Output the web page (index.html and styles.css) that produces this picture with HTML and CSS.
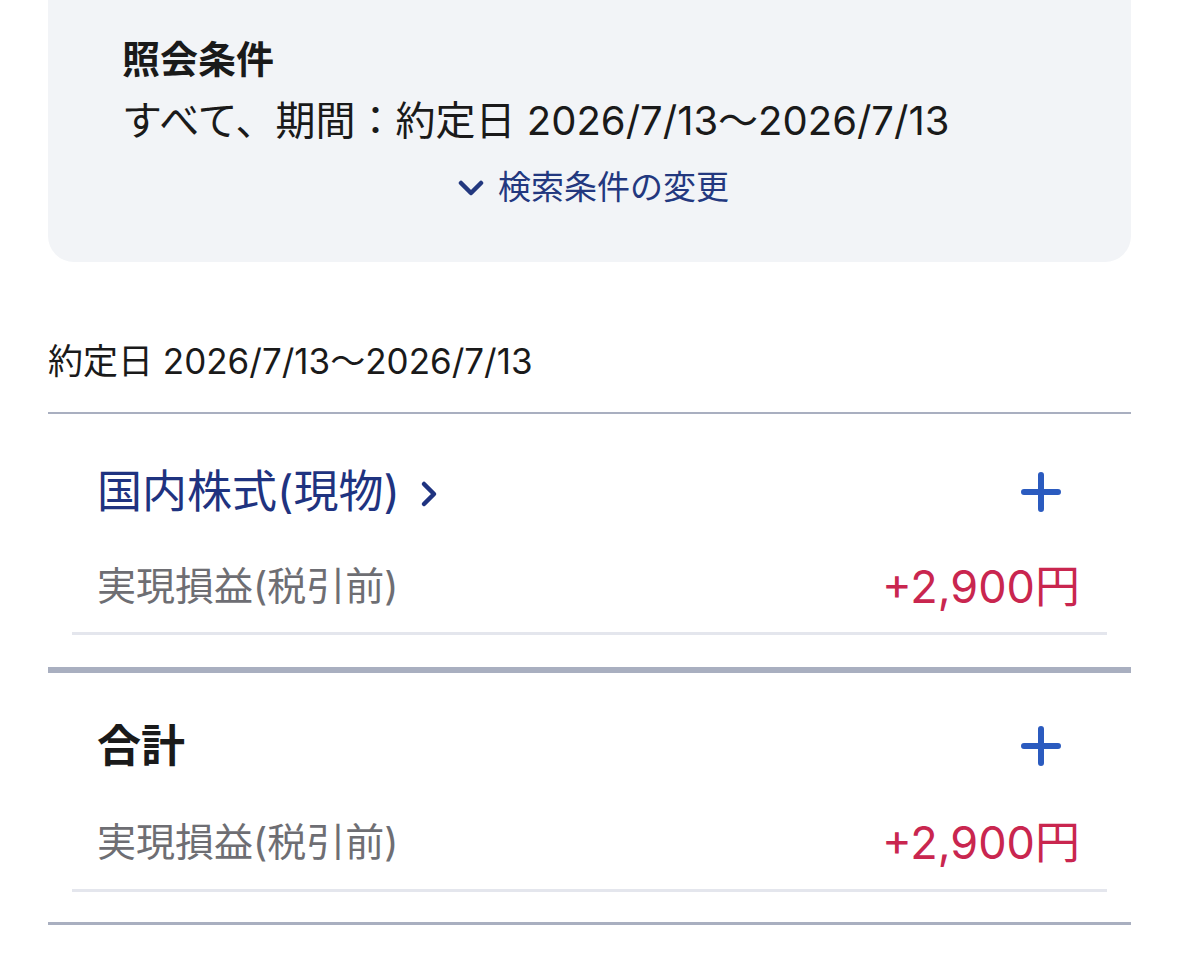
FILE: index.html
```html
<!DOCTYPE html>
<html lang="ja">
<head>
<meta charset="utf-8">
<title>照会結果</title>
<link rel="stylesheet" href="styles.css">
</head>
<body>
<div class="page">
  <section class="card">
    <h2 class="card-title">照会条件</h2>
    <p class="card-text">すべて、期間：約定日 2026/7/13～2026/7/13</p>
    <a class="card-link" href="#">
      <svg class="chev-down" viewBox="0 0 26 17" width="26" height="17"><path d="M3 3 L13 13 L23 3" fill="none" stroke="currentColor" stroke-width="4.5" stroke-linecap="round" stroke-linejoin="round"/></svg>
      <span>検索条件の変更</span>
    </a>
  </section>

  <p class="period">約定日 2026/7/13～2026/7/13</p>

  <section class="group first">
    <div class="row head">
      <a class="group-title link" href="#">国内株式(現物)
        <svg class="chev-right" viewBox="0 0 18 28" width="18" height="28"><path d="M4 4 L14 14 L4 24" fill="none" stroke="currentColor" stroke-width="4.5" stroke-linecap="round" stroke-linejoin="round"/></svg>
      </a>
      <svg class="plus" viewBox="0 0 40 40" width="40" height="40"><path d="M20 3 V37 M3 20 H37" fill="none" stroke="currentColor" stroke-width="6" stroke-linecap="round"/></svg>
    </div>
    <div class="row item">
      <span class="label">実現損益(税引前)</span>
      <span class="value plus-val">+2,900円</span>
    </div>
  </section>

  <section class="group thick">
    <div class="row head">
      <span class="group-title total">合計</span>
      <svg class="plus" viewBox="0 0 40 40" width="40" height="40"><path d="M20 3 V37 M3 20 H37" fill="none" stroke="currentColor" stroke-width="6" stroke-linecap="round"/></svg>
    </div>
    <div class="row item">
      <span class="label">実現損益(税引前)</span>
      <span class="value plus-val">+2,900円</span>
    </div>
  </section>
  <div class="end-line"></div>
</div>
</body>
</html>
```
FILE: styles.css
```css
* { box-sizing: border-box; }
body {
  margin: 0;
  background: #ffffff;
  font-family: "Inter", "Noto Sans CJK JP", sans-serif;
  color: #1a1a1a;
}
.page {
  padding: 0 48px;
}
.card {
  background: #f2f4f7;
  border-radius: 0 0 26px 26px;
  padding: 37px 74px 53px;
}
.card-title {
  margin: 0;
  font-size: 38px;
  line-height: 44px;
  font-weight: 700;
  color: #1a1a1a;
}
.card-text {
  margin: 18px 0 0;
  font-size: 40px;
  line-height: 44px;
  color: #1a1a1a;
  white-space: nowrap;
}
.card-link {
  margin-top: 22px;
  display: flex;
  justify-content: center;
  align-items: center;
  gap: 14px;
  font-size: 33px;
  line-height: 44px;
  color: #23387f;
  text-decoration: none;
  padding-left: 8px;
}
.chev-down { display: block; margin-top: 2px; }
.period {
  margin: 77px 0 0;
  font-size: 35px;
  line-height: 44px;
  color: #1a1a1a;
  padding-bottom: 29px;
  border-bottom: 2px solid #a9afc0;
}
.group {
  padding: 50px 24px 32px;
}
.group.thick {
  border-top: 6px solid #a9afc0;
  padding-top: 45px;
  padding-bottom: 30px;
}
.row {
  display: flex;
  align-items: center;
  justify-content: space-between;
}
.row.head {
  padding: 0 46px 0 25px;
  height: 56px;
}
.row.item {
  margin-top: 35px;
  height: 56px;
  padding: 0 27px 21px 25px;
  border-bottom: 3px solid #e4e6ed;
  box-sizing: content-box;
}
.group.thick .row.item {
  margin-top: 37px;
  padding-bottom: 22px;
}
.group-title {
  font-size: 45px;
  line-height: 56px;
  text-decoration: none;
}
.group-title.link {
  color: #1f3380;
  display: flex;
  align-items: center;
  gap: 20px;
}
.chev-right { display: block; margin-top: 4px; }
.group-title.total {
  font-weight: 700;
  font-size: 44px;
  color: #1a1a1a;
}
.plus { color: #2b5bbf; display: block; }
.label {
  font-size: 39px;
  color: #6e6e73;
}
.value {
  font-size: 45px;
}
.plus-val { color: #c9264f; }
.end-line {
  border-top: 3px solid #a9afc0;
}
```
